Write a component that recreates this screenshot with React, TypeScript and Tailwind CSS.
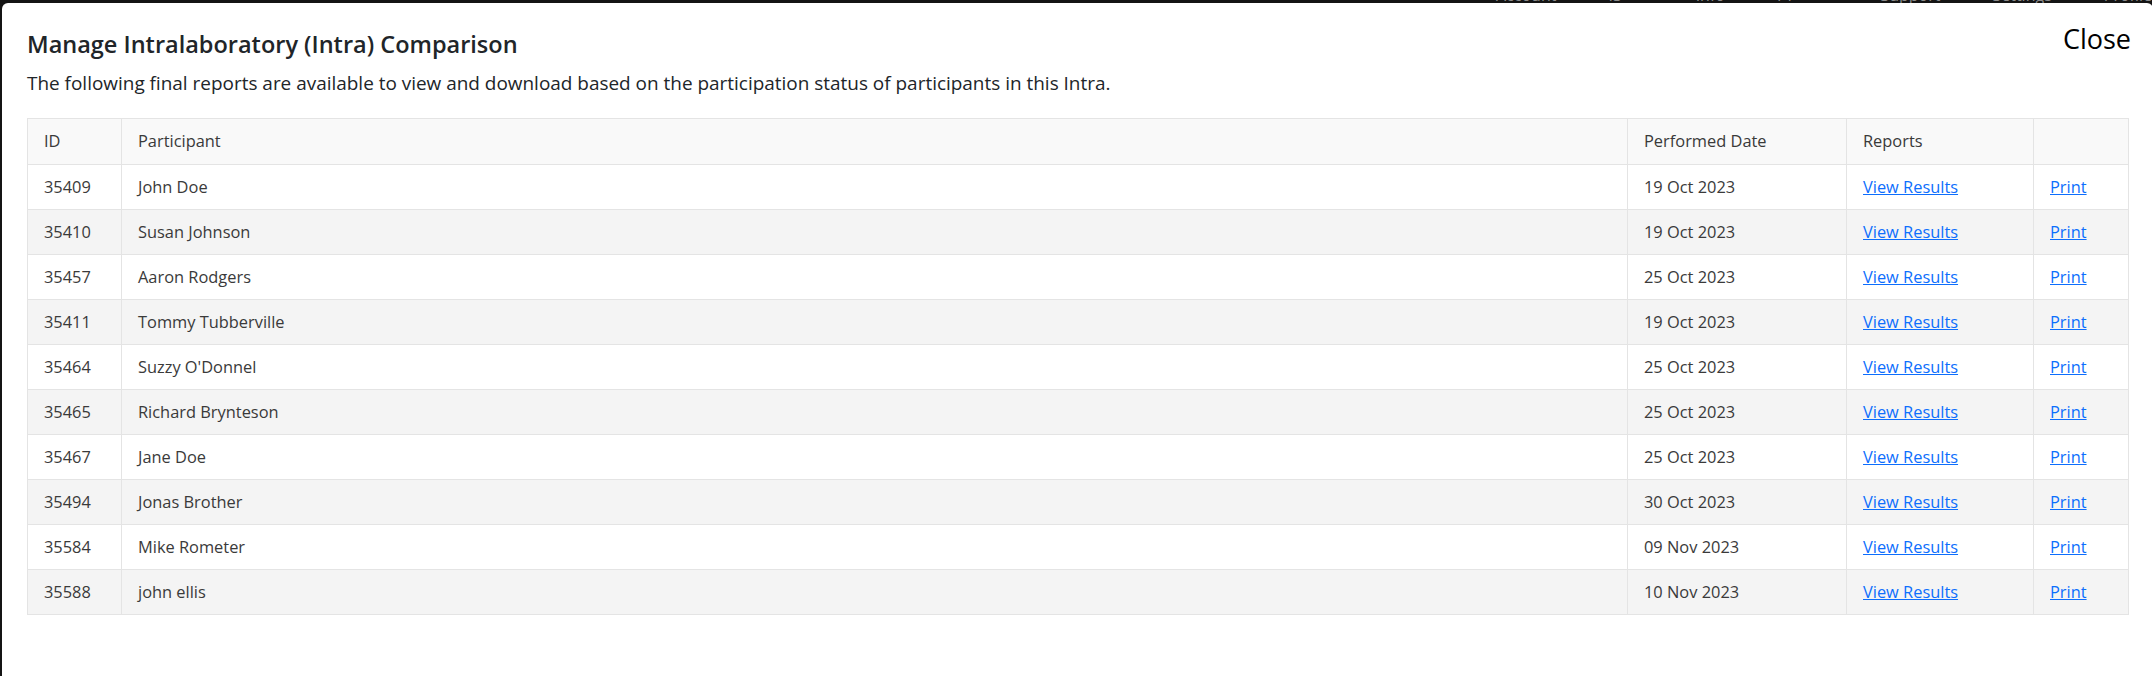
import React from "react";

const rows = [
  { id: "35409", name: "John Doe", date: "19 Oct 2023" },
  { id: "35410", name: "Susan Johnson", date: "19 Oct 2023" },
  { id: "35457", name: "Aaron Rodgers", date: "25 Oct 2023" },
  { id: "35411", name: "Tommy Tubberville", date: "19 Oct 2023" },
  { id: "35464", name: "Suzzy O'Donnel", date: "25 Oct 2023" },
  { id: "35465", name: "Richard Brynteson", date: "25 Oct 2023" },
  { id: "35467", name: "Jane Doe", date: "25 Oct 2023" },
  { id: "35494", name: "Jonas Brother", date: "30 Oct 2023" },
  { id: "35584", name: "Mike Rometer", date: "09 Nov 2023" },
  { id: "35588", name: "john ellis", date: "10 Nov 2023" },
];

const navItems = ["Account", "IS-11", "Info", "FT Plan", "Support", "Settings", "Profile"];

const cell = "h-[45px] border border-[#e4e4e4] px-[16px] align-middle";

export default function App() {
  return (
    <div
      className="h-[676px] w-full overflow-hidden bg-[#141414]"
      style={{ fontFamily: '"Open Sans", "Noto Sans", sans-serif' }}
    >
      {/* navbar behind the modal, mostly hidden */}
      <div className="flex h-[3px] overflow-hidden pl-[1496px]">
        <div className="-mt-[14px] flex gap-[52px] text-[16px] leading-[18px] text-[#8a8a8a]">
          {navItems.map((n) => (
            <span key={n}>{n}</span>
          ))}
        </div>
      </div>

      <div className="ml-[2px] h-[673px] w-[2151px] rounded-t-[6px] bg-white px-[25px]">
        <div className="flex items-start justify-between pt-[23px]">
          <div>
            <h4 className="text-[23.5px] font-semibold leading-[36px] text-[#212529]">
              Manage Intralaboratory (Intra) Comparison
            </h4>
            <p className="mt-[6px] text-[18.95px] leading-[30px] text-[#212529]">
              The following final reports are available to view and download based on the participation
              status of participants in this Intra.
            </p>
          </div>
          <button className="mr-[-3px] mt-[-7px] text-[27px] leading-[40px] text-black">Close</button>
        </div>

        <table className="mt-[20px] w-[2101px] table-fixed border-collapse text-[16.4px] text-[#3a3a3a]">
          <colgroup>
            <col className="w-[94px]" />
            <col className="w-[1506px]" />
            <col className="w-[219px]" />
            <col className="w-[187px]" />
            <col className="w-[95px]" />
          </colgroup>
          <thead>
            <tr className="bg-[#f9f9f9] text-left">
              <th className={`${cell} h-[46px] font-normal`}>ID</th>
              <th className={`${cell} h-[46px] font-normal`}>Participant</th>
              <th className={`${cell} h-[46px] font-normal`}>Performed Date</th>
              <th className={`${cell} h-[46px] font-normal`}>Reports</th>
              <th className={`${cell} h-[46px] font-normal`}></th>
            </tr>
          </thead>
          <tbody>
            {rows.map((r, i) => (
              <tr key={r.id} className={i % 2 === 1 ? "bg-[#f4f4f4]" : "bg-white"}>
                <td className={cell}>{r.id}</td>
                <td className={cell}>{r.name}</td>
                <td className={cell}>{r.date}</td>
                <td className={cell}>
                  <a href="#" className="text-[#0d6efd] underline">
                    View Results
                  </a>
                </td>
                <td className={cell}>
                  <a href="#" className="text-[#0d6efd] underline">
                    Print
                  </a>
                </td>
              </tr>
            ))}
          </tbody>
        </table>
      </div>
    </div>
  );
}
